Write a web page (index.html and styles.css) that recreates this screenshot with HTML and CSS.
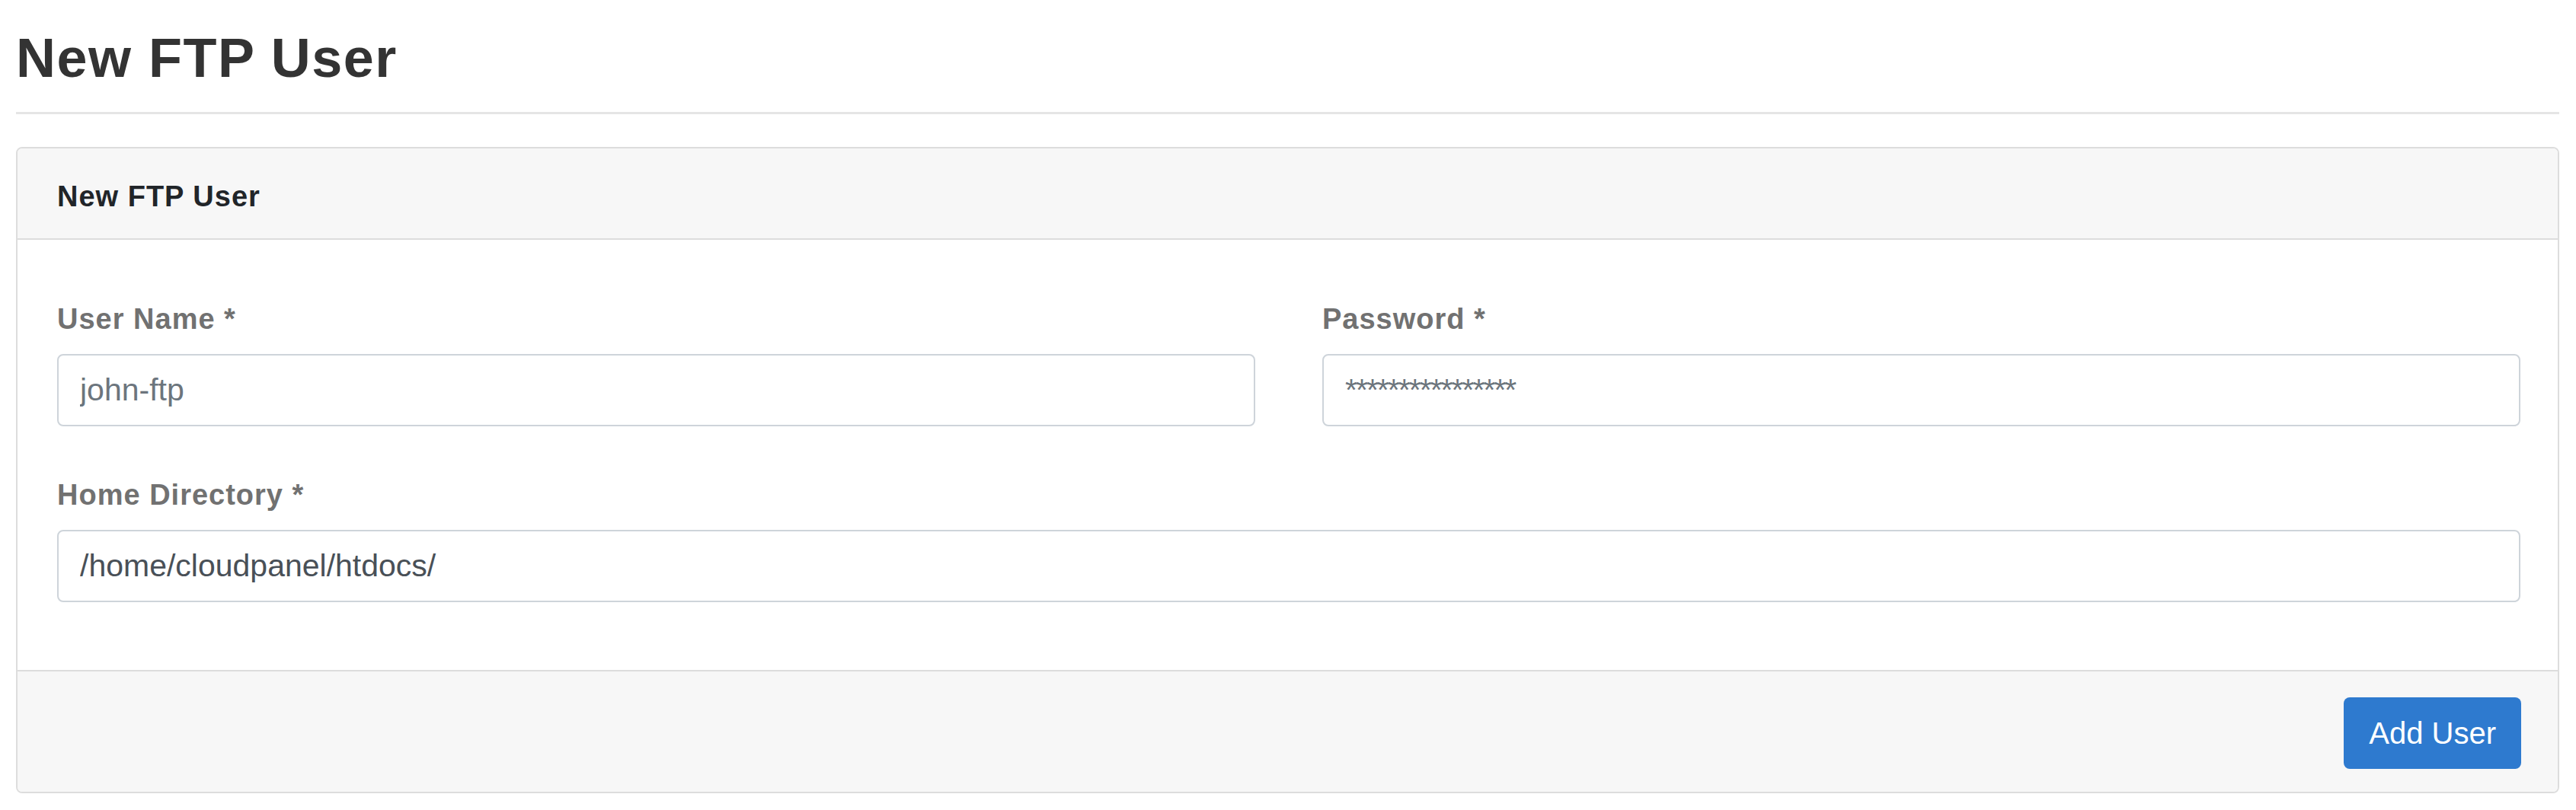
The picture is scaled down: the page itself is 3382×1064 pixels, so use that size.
FILE: index.html
```html
<!DOCTYPE html>
<html lang="en">

<head>
    <meta charset="UTF-8">
    <meta name="viewport" content="width=device-width, initial-scale=1.0">
    <title>New FTP User</title>

    <link rel="stylesheet" href="styles.css">
</head>

<body>

    <main class="page">
        <h1 class="page-title">New FTP User</h1>

        <form class="card">
            <div class="card-header">New FTP User</div>

            <div class="card-body">
                <div class="form-row">
                    <div class="form-group">
                        <label for="user-name">User Name *</label>
                        <input type="text" id="user-name" placeholder="john-ftp">
                    </div>
                    <div class="form-group">
                        <label for="password">Password *</label>
                        <input type="text" id="password" class="input-password" placeholder="****************">
                    </div>
                </div>

                <div class="form-group">
                    <label for="home-dir">Home Directory *</label>
                    <input type="text" id="home-dir" value="/home/cloudpanel/htdocs/">
                </div>
            </div>

            <div class="card-footer">
                <button type="button" class="btn-primary">Add User</button>
            </div>
        </form>
    </main>

</body>

</html>
```

FILE: styles.css
```css
* {
    margin: 0;
    padding: 0;
    box-sizing: border-box;
}

body {
    background-color: #fff;
    font-family: "Liberation Sans", Arial, sans-serif;
    color: #212529;
}

.page {
    padding: 33px 22px 22px 21px;
}

.page-title {
    font-size: 72px;
    line-height: 86px;
    font-weight: bold;
    letter-spacing: 1.5px;
    color: #333;
    padding-bottom: 28px;
    border-bottom: 3px solid #e5e5e5;
    margin-bottom: 43px;
}

.card {
    border: 2px solid #dddddd;
    border-radius: 8px;
    background-color: #fff;
    overflow: hidden;
}

.card-header {
    background-color: #f7f7f7;
    border-bottom: 2px solid #dddddd;
    padding: 35px 52px 26px;
    font-size: 38px;
    line-height: 57px;
    font-weight: bold;
    letter-spacing: 1px;
    color: #212529;
}

.card-body {
    display: flex;
    flex-direction: column;
    gap: 60px;
    padding: 74px 49px 89px 52px;
}

.form-row {
    display: grid;
    grid-template-columns: 1fr 1fr;
    gap: 88px;
}

.form-group {
    display: flex;
    flex-direction: column;
}

.form-group label {
    font-size: 38px;
    line-height: 60px;
    font-weight: bold;
    letter-spacing: 1px;
    color: #717171;
    margin-bottom: 16px;
}

.form-group input {
    width: 100%;
    height: 95px;
    padding: 0 28px;
    border: 2px solid #ced4da;
    border-radius: 8px;
    font-family: "Liberation Sans", Arial, sans-serif;
    font-size: 41px;
    color: #495057;
    background-color: #fff;
    outline: none;
}

.form-group input::placeholder {
    color: #6c757d;
    opacity: 1;
}

.form-group .input-password {
    letter-spacing: -2px;
}

.card-footer {
    display: flex;
    justify-content: flex-end;
    background-color: #f7f7f7;
    border-top: 2px solid #dddddd;
    padding: 34px 48px 30px;
}

.btn-primary {
    height: 94px;
    padding: 0 33px;
    border: none;
    border-radius: 8px;
    background-color: #2e7acf;
    color: #fff;
    font-family: "Liberation Sans", Arial, sans-serif;
    font-size: 40px;
    cursor: pointer;
}

.btn-primary:hover {
    background-color: #2669b3;
}
```
